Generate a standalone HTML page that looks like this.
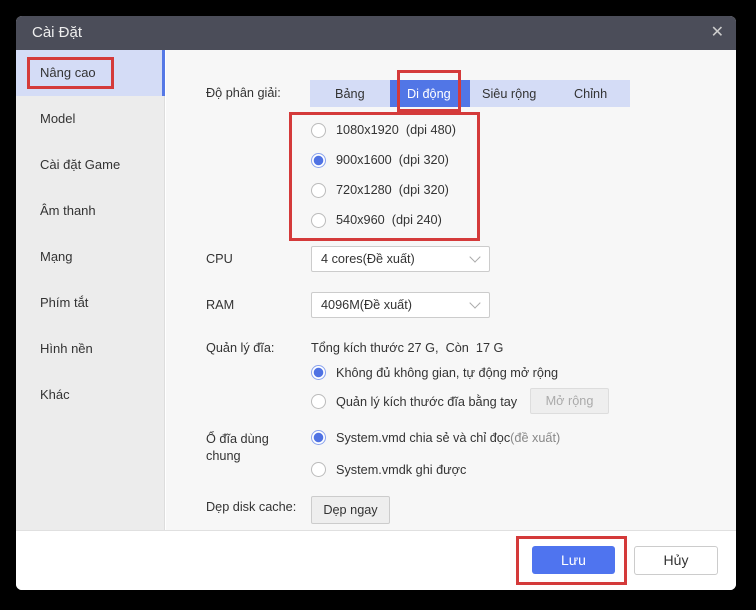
<!DOCTYPE html>
<html><head><meta charset="utf-8"><style>
*{box-sizing:border-box;margin:0;padding:0}
body{width:756px;height:610px;background:#000;font-family:"Liberation Sans","Noto Sans CJK SC",sans-serif;font-size:12.7px;color:#333;position:relative;overflow:hidden}
.dlg{position:absolute;left:16px;top:16px;width:720px;height:574px;background:#fff;border-radius:6px;overflow:hidden}
.title{position:absolute;left:0;top:0;width:720px;height:34px;background:#4b4d59;color:#eee;font-size:15px;line-height:34px;padding-left:16px}
.x{position:absolute;right:12px;top:0;color:#ccc;font-size:16px;font-weight:300}
.side{position:absolute;left:0;top:34px;width:149px;height:480px;background:#ececec;border-right:1px solid #ddd}
.side div{position:absolute;left:24px;font-size:13px}
.act{position:absolute;left:0;top:0;width:149px;height:46px;background:#d4dcf6;border-right:3px solid #5578e6}
.main{position:absolute;left:150px;top:34px;width:570px;height:480px;background:#f7f7f7}
.foot{position:absolute;left:0;top:514px;width:720px;height:60px;background:#fff;border-top:1px solid #e0e0e0}
.a{position:absolute;white-space:nowrap}
.red{position:absolute;border:3px solid #d43a3a}
.r{position:absolute;width:15px;height:15px;border-radius:50%;border:1px solid #bbb;background:#fff}
.r.on{border-color:#8aa3ee;background:radial-gradient(circle,#4f72e3 0 4.5px,#fff 5px)}
.sel{position:absolute;width:179px;height:26px;border:1px solid #ccc;background:#fff;border-radius:2px;padding-left:9px;line-height:24px}
.sel:after{content:"";position:absolute;right:10px;top:6px;width:7px;height:7px;border-right:1px solid #aaa;border-bottom:1px solid #aaa;transform:rotate(45deg)}
.btn{position:absolute;border:1px solid #ccc;background:#eee;text-align:center;border-radius:2px}
</style></head><body>
<div class="dlg">
<div class="title">Cài Đặt<span class="x">✕</span></div>
<div class="side">
<div class="act" style="left:0"></div>
<div style="top:15px">Nâng cao</div>
<div style="top:61px">Model</div>
<div style="top:107px">Cài đặt Game</div>
<div style="top:153px">Âm thanh</div>
<div style="top:199px">Mạng</div>
<div style="top:245px">Phím tắt</div>
<div style="top:291px">Hình nền</div>
<div style="top:337px">Khác</div>
</div>
<div class="main"></div>
<div class="foot"></div>
</div>
<div class="a" style="left:206px;top:86px">Độ phân giải:</div>
<div class="a" style="left:310px;top:80px;width:320px;height:27px;background:#d4dcf6"></div>
<div class="a" style="left:390px;top:80px;width:80px;height:27px;background:#5176e6"></div>
<div class="a" style="left:335px;top:87px">Bảng</div>
<div class="a" style="left:407px;top:87px;color:#fff">Di động</div>
<div class="a" style="left:482px;top:87px">Siêu rộng</div>
<div class="a" style="left:574px;top:87px">Chỉnh</div>
<div class="r" style="left:311px;top:123px"></div><div class="a" style="left:336px;top:123px">1080x1920&nbsp; (dpi 480)</div>
<div class="r on" style="left:311px;top:153px"></div><div class="a" style="left:336px;top:153px">900x1600&nbsp; (dpi 320)</div>
<div class="r" style="left:311px;top:183px"></div><div class="a" style="left:336px;top:183px">720x1280&nbsp; (dpi 320)</div>
<div class="r" style="left:311px;top:213px"></div><div class="a" style="left:336px;top:213px">540x960&nbsp; (dpi 240)</div>
<div class="a" style="left:206px;top:252px">CPU</div>
<div class="sel" style="left:311px;top:246px">4 cores(Đề xuất)</div>
<div class="a" style="left:206px;top:298px">RAM</div>
<div class="sel" style="left:311px;top:292px">4096M(Đề xuất)</div>
<div class="a" style="left:206px;top:341px">Quản lý đĩa:</div>
<div class="a" style="left:311px;top:341px">Tổng kích thước 27 G,&nbsp; Còn&nbsp; 17 G</div>
<div class="r on" style="left:311px;top:365px"></div><div class="a" style="left:336px;top:366px">Không đủ không gian, tự động mở rộng</div>
<div class="r" style="left:311px;top:394px"></div><div class="a" style="left:336px;top:395px">Quản lý kích thước đĩa bằng tay</div>
<div class="btn" style="left:530px;top:388px;width:79px;height:26px;line-height:24px;color:#aaa;background:#eee;border-color:#ddd">Mở rộng</div>
<div class="a" style="left:206px;top:432px">Ổ đĩa dùng</div>
<div class="a" style="left:206px;top:449px">chung</div>
<div class="r on" style="left:311px;top:430px"></div><div class="a" style="left:336px;top:431px">System.vmd chia sẻ và chỉ đọc<span style="color:#888">(đề xuất)</span></div>
<div class="r" style="left:311px;top:462px"></div><div class="a" style="left:336px;top:463px">System.vmdk ghi được</div>
<div class="a" style="left:206px;top:500px">Dẹp disk cache:</div>
<div class="btn" style="left:311px;top:496px;width:79px;height:28px;line-height:26px;color:#333">Dẹp ngay</div>
<div class="a" style="left:532px;top:546px;width:83px;height:28px;background:#4f74ef;border-radius:3px;color:#fff;text-align:center;line-height:28px;font-size:14px">Lưu</div>
<div class="a" style="left:634px;top:546px;width:84px;height:29px;background:#fff;border:1px solid #ccc;border-radius:3px;text-align:center;line-height:27px;font-size:14px">Hủy</div>
<div class="red" style="left:27px;top:57px;width:87px;height:32px"></div>
<div class="red" style="left:397px;top:70px;width:64px;height:42px"></div>
<div class="red" style="left:289px;top:112px;width:191px;height:129px"></div>
<div class="red" style="left:516px;top:536px;width:111px;height:49px"></div>
</body></html>
